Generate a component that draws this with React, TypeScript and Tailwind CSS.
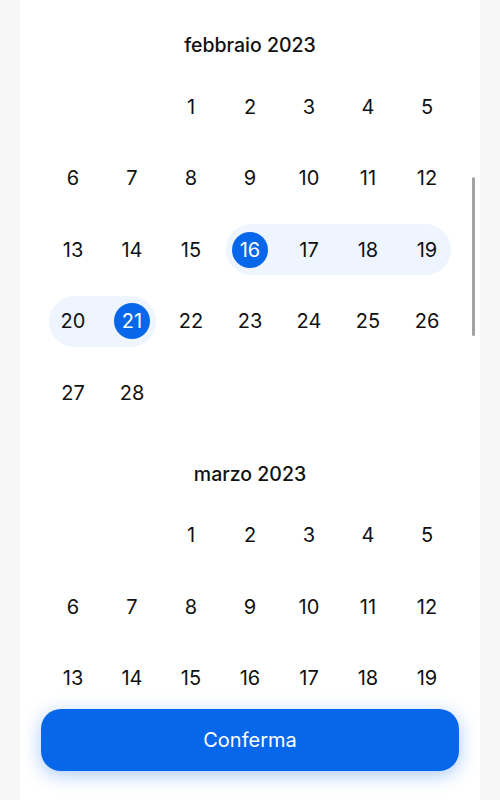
import React from "react";

type Month = {
  title: string;
  offset: number; // empty cells before day 1
  days: number;
  visibleRows?: number;
};

// marzo continues below the button; only the rows in view are drawn
const months: Month[] = [
  { title: "febbraio 2023", offset: 2, days: 28 },
  { title: "marzo 2023", offset: 2, days: 31, visibleRows: 3 },
];

// selected range: 16 - 21 febbraio
const rangeStart = 16;
const rangeEnd = 21;

function DayCell({ day, monthIndex, col }: { day: number | null; monthIndex: number; col: number }) {
  if (day === null) return <div className="w-[59px] h-[51px]" />;
  const inFeb = monthIndex === 0;
  const inRange = inFeb && day >= rangeStart && day <= rangeEnd;
  const isEdge = inFeb && (day === rangeStart || day === rangeEnd);
  const startSeg = inRange && (day === rangeStart || col === 0);
  const endSeg = inRange && (day === rangeEnd || col === 6);

  let band = "justify-center";
  if (inRange) band = "bg-[#eef5fe] justify-center";
  if (startSeg) band = "bg-[#eef5fe] ml-[5.5px] rounded-l-full justify-start pl-[6px]";
  if (endSeg) band = "bg-[#eef5fe] mr-[5.5px] rounded-r-full justify-end pr-[6px]";

  return (
    <div className="w-[59px] h-[51px] flex">
      <div className={"flex-1 flex items-center " + band}>
        <div
          className={
            "w-9 h-9 shrink-0 rounded-full flex items-center justify-center text-[20px] " +
            (isEdge ? "bg-[#0767eb] text-white" : "text-[#111111]")
          }
        >
          {day}
        </div>
      </div>
    </div>
  );
}

function MonthBlock({ month, index }: { month: Month; index: number }) {
  const cells: (number | null)[] = [];
  for (let i = 0; i < month.offset; i++) cells.push(null);
  for (let d = 1; d <= month.days; d++) cells.push(d);
  let rows: (number | null)[][] = [];
  for (let i = 0; i < cells.length; i += 7) rows.push(cells.slice(i, i + 7));
  if (month.visibleRows) rows = rows.slice(0, month.visibleRows);

  return (
    <div className="pt-[21px]">
      <div className="h-[50px] flex items-center justify-center text-[19.5px] font-medium text-[#111111]">
        {month.title}
      </div>
      {rows.map((row, r) => (
        <div key={r} className="h-[71.5px] flex items-center">
          {row.map((d, c) => (
            <DayCell key={c} day={d} monthIndex={index} col={c} />
          ))}
        </div>
      ))}
    </div>
  );
}

export default function App() {
  return (
    <div
      className="h-[800px] bg-[#f7f7f7] flex justify-center overflow-hidden"
      style={{ fontFamily: "Inter, 'Noto Sans', sans-serif" }}
    >
      <div className="w-[460px] h-full bg-white relative flex flex-col">
        <div className="flex-1 overflow-hidden px-[23.5px]">
          {months.map((m, i) => (
            <MonthBlock key={i} month={m} index={i} />
          ))}
        </div>

        <div className="px-[21px] pb-[29px]">
          <button className="w-full h-[62px] rounded-[20px] bg-[#0767eb] text-white text-[20px] shadow-[0_4px_18px_rgba(7,103,235,0.35)]">
            Conferma
          </button>
        </div>

        {/* overlay scrollbar */}
        <div className="absolute left-[452px] top-[177px] w-[3px] h-[159px] rounded-full bg-[#a3a3a3]" />
      </div>
    </div>
  );
}
